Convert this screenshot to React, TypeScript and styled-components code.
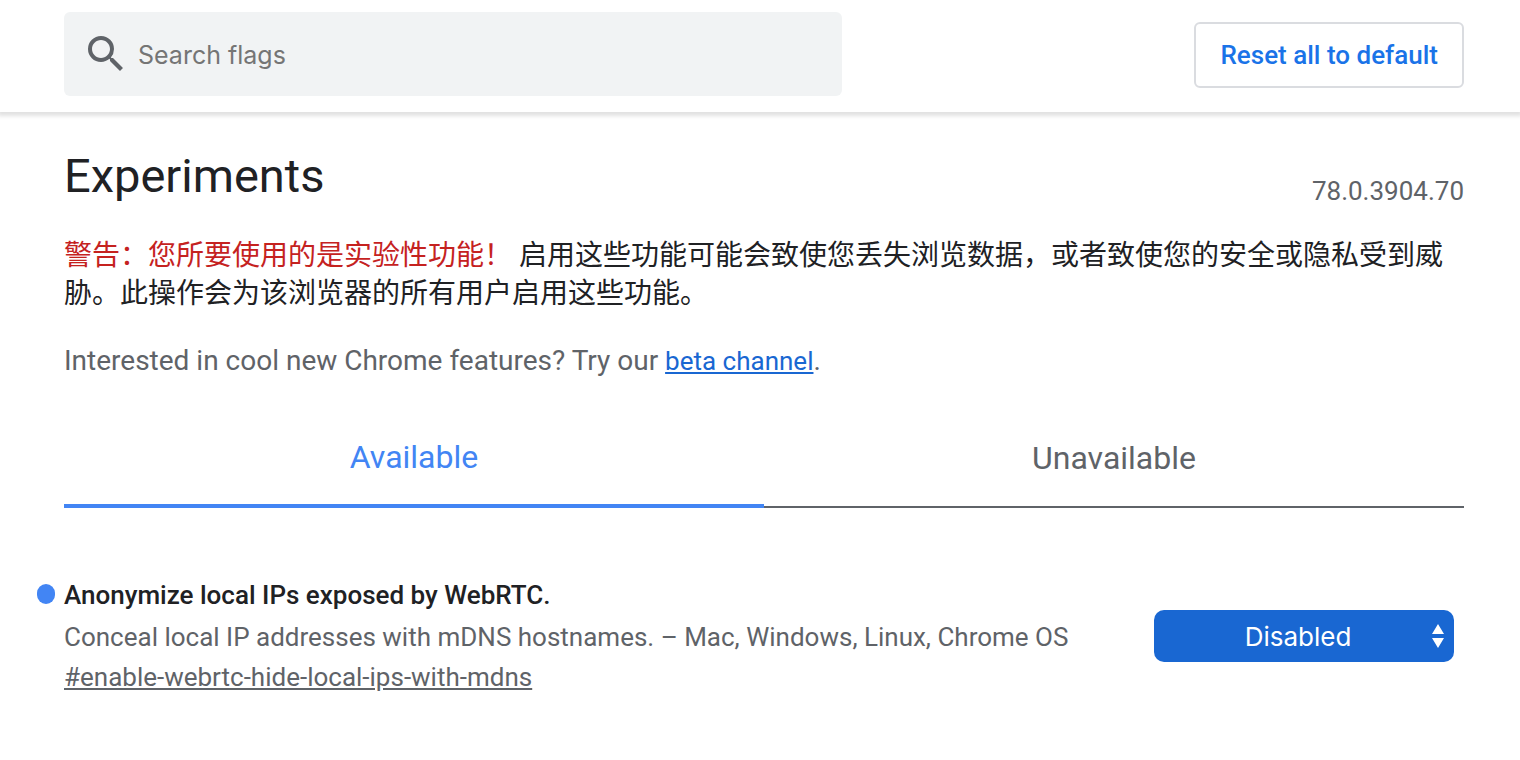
import React, { useState } from "react";
import styled, { createGlobalStyle } from "styled-components";

const GlobalStyle = createGlobalStyle`
  *, *::before, *::after { box-sizing: border-box; }
  body {
    margin: 0;
    background: #fff;
    color: #202124;
    font-family: Roboto, "Noto Sans CJK SC", sans-serif;
    font-size: 26px;
    line-height: 40px;
  }
  button, input, select { font: inherit; }
`;

const Header = styled.header`
  display: flex;
  align-items: flex-start;
  justify-content: space-between;
  padding: 12px 56px 16px 64px;
  box-shadow: 0 2px 4px 2px rgba(0, 0, 0, 0.12);
`;

const SearchBox = styled.label`
  display: flex;
  align-items: center;
  flex: 0 1 778px;
  height: 84px;
  padding-left: 18px;
  border-radius: 6px;
  background: #f1f3f4;
`;

const SearchIcon = styled.svg`
  flex: none;
  width: 48px;
  height: 48px;
  fill: #5f6368;
`;

const SearchInput = styled.input`
  flex: 1;
  min-width: 0;
  padding: 2px 8px 0;
  border: 0;
  outline: 0;
  background: transparent;
  color: #202124;
  font-family: Inter, sans-serif;
  font-size: 25px;
  &::placeholder { color: #757575; opacity: 1; }
`;

const ResetButton = styled.button`
  height: 66px;
  margin-top: 10px;
  padding: 0 24px;
  border: 2px solid #dadce0;
  border-radius: 6px;
  background: #fff;
  color: #1a73e8;
  font-weight: 500;
  white-space: nowrap;
`;

const Main = styled.main`
  padding: 32px 56px 48px 64px;
`;

const TitleRow = styled.div`
  display: flex;
  align-items: flex-end;
  justify-content: space-between;
`;

const Title = styled.h1`
  margin: 0;
  font-size: 47px;
  font-weight: 400;
  line-height: 64px;
`;

const Version = styled.span`
  margin-bottom: -3px;
  color: #5f6368;
`;

const Blurb = styled.p`
  margin: 29px 0 0;
  font-size: 28px;
  line-height: 38px;
`;

const Warning = styled.span`
  color: #c5221f;
`;

const Promo = styled.p`
  margin: 28px 0 0;
  color: #5f6368;
  font-size: 28px;
`;

const PromoLink = styled.a`
  color: #1967d2;
  font-size: 26px;
`;

const Tabs = styled.div`
  display: grid;
  grid-template-columns: 1fr 1fr;
  margin-top: 27px;
`;

const Tab = styled.button<{ $active: boolean }>`
  height: 100px;
  padding: 2px 0 0;
  border: 0;
  border-bottom: ${(p) => (p.$active ? "4px solid #4285f4" : "2px solid #5f6368")};
  background: none;
  color: ${(p) => (p.$active ? "#4285f4" : "#5f6368")};
  font-size: 32px;
`;

const Experiment = styled.section`
  display: flex;
  align-items: center;
  justify-content: space-between;
  gap: 24px;
  margin-top: 66px;
  padding-right: 10px;
`;

const ExperimentName = styled.h2`
  position: relative;
  margin: 0 0 1px;
  font-size: 26px;
  font-weight: 500;
  line-height: 42px;
`;

const ChangedDot = styled.span`
  position: absolute;
  top: 10px;
  left: -27px;
  width: 18px;
  height: 20px;
  border-radius: 9px;
  background: #4285f4;
`;

const Description = styled.p`
  margin: 0;
  color: #5f6368;
`;

const Permalink = styled.a`
  color: #5f6368;
`;

const SelectWrap = styled.div`
  position: relative;
  flex: 0 0 300px;
  height: 52px;
`;

const Select = styled.select`
  display: block;
  width: 100%;
  height: 52px;
  padding: 2px 28px 0 16px;
  border: 0;
  border-radius: 10px;
  appearance: none;
  background: #1967d2;
  color: #fff;
  font-family: Inter, sans-serif;
  text-align-last: center;
`;

const SelectArrows = styled.svg`
  position: absolute;
  top: 14px;
  right: 10px;
  width: 12px;
  height: 24px;
  fill: #fff;
  pointer-events: none;
`;

export default function App() {
  const [tab, setTab] = useState("available");
  return (
    <>
      <GlobalStyle />
      <Header>
        <SearchBox>
          <SearchIcon viewBox="0 0 24 24" aria-hidden="true">
            <path d="M15.5 14h-.79l-.28-.27A6.471 6.471 0 0 0 16 9.500 6.500 6.500 0 1 0 9.500 16c1.610 0 3.090-.59 4.230-1.570l.27.28v.79l5 4.990L20.490 19l-4.990-5zm-6 0C7.010 14 5 11.990 5 9.500S7.010 5 9.500 5 14 7.010 14 9.500 11.990 14 9.500 14z" />
          </SearchIcon>
          <SearchInput type="text" placeholder="Search flags" aria-label="Search flags" />
        </SearchBox>
        <ResetButton type="button">Reset all to default</ResetButton>
      </Header>
      <Main>
        <TitleRow>
          <Title>Experiments</Title>
          <Version>78.0.3904.70</Version>
        </TitleRow>
        <Blurb lang="zh-CN">
          <Warning>警告：您所要使用的是实验性功能！</Warning>{" "}
          启用这些功能可能会致使您丢失浏览数据，或者致使您的安全或隐私受到威胁。此操作会为该浏览器的所有用户启用这些功能。
        </Blurb>
        <Promo>
          Interested in cool new Chrome features? Try our <PromoLink href="#beta">beta channel</PromoLink>.
        </Promo>
        <Tabs role="tablist">
          <Tab type="button" role="tab" aria-selected={tab === "available"} $active={tab === "available"} onClick={() => setTab("available")}>
            Available
          </Tab>
          <Tab type="button" role="tab" aria-selected={tab === "unavailable"} $active={tab === "unavailable"} onClick={() => setTab("unavailable")}>
            Unavailable
          </Tab>
        </Tabs>
        <Experiment>
          <div>
            <ExperimentName id="webrtc-name">
              <ChangedDot />
              Anonymize local IPs exposed by WebRTC.
            </ExperimentName>
            <Description>Conceal local IP addresses with mDNS hostnames. – Mac, Windows, Linux, Chrome OS</Description>
            <Permalink href="#enable-webrtc-hide-local-ips-with-mdns">#enable-webrtc-hide-local-ips-with-mdns</Permalink>
          </div>
          <SelectWrap>
            <Select aria-labelledby="webrtc-name" defaultValue="Disabled">
              <option>Default</option>
              <option>Enabled</option>
              <option>Disabled</option>
            </Select>
            <SelectArrows viewBox="0 0 12 24" aria-hidden="true">
              <path d="M6 0l6 10H0zM6 24l6-10H0z" />
            </SelectArrows>
          </SelectWrap>
        </Experiment>
      </Main>
    </>
  );
}
